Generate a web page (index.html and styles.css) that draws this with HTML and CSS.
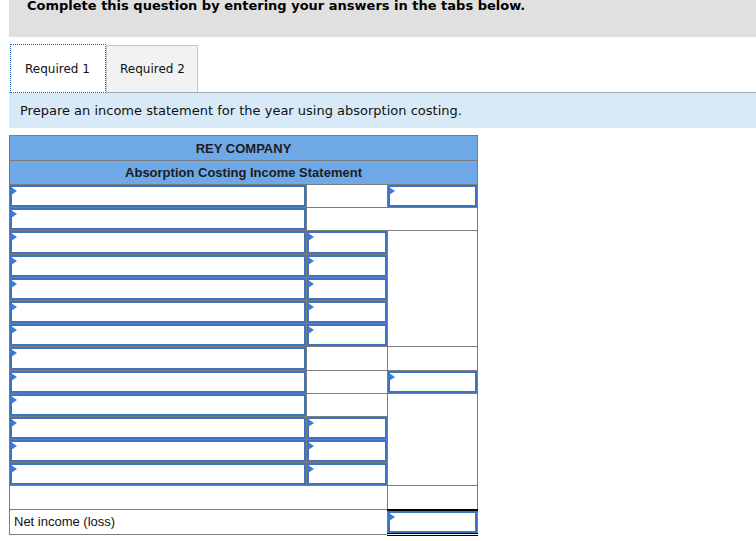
FILE: index.html
```html
<!DOCTYPE html>
<html>
<head>
<meta charset="utf-8">
<link rel="stylesheet" href="styles.css">
</head>
<body>
<div class="page">
  <div class="topbar"><p class="topbar-text">Complete this question by entering your answers in the tabs below.</p></div>
  <div class="tabs">
    <div class="tab tab-active">Required 1</div>
    <div class="tab">Required 2</div>
  </div>
  <div class="instr">Prepare an income statement for the year using absorption costing.</div>
  <table class="stmt">
    <colgroup><col class="c1"><col class="c2"><col class="c3"></colgroup>
    <tr class="hd hd1"><th colspan="3">REY COMPANY</th></tr>
    <tr class="hd hd2"><th colspan="3">Absorption Costing Income Statement</th></tr>
    <tr class="r"><td class="in"><span class="flag"></span><input class="field"></td><td></td><td class="in"><span class="flag"></span><input class="field"></td></tr>
    <tr class="r"><td class="in"><span class="flag"></span><input class="field"></td><td colspan="2"></td></tr>
    <tr class="r"><td class="in"><span class="flag"></span><input class="field"></td><td class="in"><span class="flag"></span><input class="field"></td><td rowspan="5"></td></tr>
    <tr class="r"><td class="in"><span class="flag"></span><input class="field"></td><td class="in"><span class="flag"></span><input class="field"></td></tr>
    <tr class="r"><td class="in"><span class="flag"></span><input class="field"></td><td class="in"><span class="flag"></span><input class="field"></td></tr>
    <tr class="r"><td class="in"><span class="flag"></span><input class="field"></td><td class="in"><span class="flag"></span><input class="field"></td></tr>
    <tr class="r"><td class="in"><span class="flag"></span><input class="field"></td><td class="in"><span class="flag"></span><input class="field"></td></tr>
    <tr class="r"><td class="in"><span class="flag"></span><input class="field"></td><td></td><td class="topline"></td></tr>
    <tr class="r"><td class="in"><span class="flag"></span><input class="field"></td><td class="topline"></td><td class="in"><span class="flag"></span><input class="field"></td></tr>
    <tr class="r"><td class="in"><span class="flag"></span><input class="field"></td><td></td><td rowspan="4"></td></tr>
    <tr class="r"><td class="in"><span class="flag"></span><input class="field"></td><td class="in"><span class="flag"></span><input class="field"></td></tr>
    <tr class="r"><td class="in"><span class="flag"></span><input class="field"></td><td class="in"><span class="flag"></span><input class="field"></td></tr>
    <tr class="r"><td class="in"><span class="flag"></span><input class="field"></td><td class="in"><span class="flag"></span><input class="field"></td></tr>
    <tr class="r"><td colspan="2"></td><td></td></tr>
    <tr class="r"><td colspan="2" class="label">Net income (loss)</td><td class="in total"><span class="flag"></span><input class="field"></td></tr>
  </table>
</div>
</body>
</html>
```

FILE: styles.css
```css
html, body {
  margin: 0;
  padding: 0;
  background: #ffffff;
}

body {
  font-family: "DejaVu Sans", Verdana, sans-serif;
  font-size: 12px;
  color: #111111;
}

.page {
  padding-left: 9px;
}

.topbar {
  height: 37px;
  background: #e0e0e0;
  padding-left: 18px;
  box-sizing: border-box;
  overflow: hidden;
}

.topbar-text {
  margin: 0;
  font-weight: bold;
  font-size: 13px;
  line-height: 12px;
  color: #000000;
}

.tabs {
  display: flex;
  align-items: flex-end;
  margin-top: 7px;
  border-bottom: 1px solid #a6a6a6;
  height: 48px;
}

.tab {
  box-sizing: border-box;
  height: 47px;
  width: 92px;
  line-height: 47px;
  padding-left: 13px;
  background: #f2f2f2;
  border: 1px solid #c6c6c6;
  border-bottom: none;
  color: #111111;
}

.tab-active {
  height: 49px;
  width: 96px;
  margin-left: 1px;
  margin-bottom: -1px;
  padding-left: 14px;
  line-height: 49px;
  background: #ffffff;
  border: 1px dotted #1f5fc0;
}

.instr {
  height: 35px;
  line-height: 36px;
  font-size: 13px;
  background: #d8eaf8;
  padding-left: 11px;
  color: #111111;
}

.stmt {
  margin-top: 7px;
  border-collapse: collapse;
  table-layout: fixed;
  width: 468px;
  border: 1px solid #7c7c7c;
  font-family: "Liberation Sans", Arial, sans-serif;
}

.c1 { width: 297px; }
.c2 { width: 81px; }
.c3 { width: 90px; }

.stmt th,
.stmt td {
  border: 1px solid #7c7c7c;
  padding: 0;
}

.hd th {
  background: #6fa8e7;
  font-size: 13px;
  font-weight: bold;
  color: #1c1c1c;
  text-align: center;
}

.hd1 th { height: 24px; }
.hd2 th { height: 23px; }

.r td {
  height: 22.2px;
}

.in {
  position: relative;
}

.field {
  display: block;
  box-sizing: border-box;
  width: 100%;
  height: 100%;
  min-height: 22px;
  margin: 0;
  padding: 0;
  border: 2px solid #3d73c2;
  background: #ffffff;
  outline: none;
}

.flag {
  position: absolute;
  left: 1px;
  top: 2px;
  width: 0;
  height: 0;
  border-left: 6px solid #3a7bd8;
  border-top: 4px solid transparent;
  border-bottom: 4px solid transparent;
}

.stmt td.topline {
  border-top: 1px solid #000000;
}

.stmt td.total {
  border-top: 2px solid #000000;
  border-bottom: 3px double #000000;
}

.label {
  font-size: 13px;
  padding-left: 4px !important;
  color: #111111;
}
```
